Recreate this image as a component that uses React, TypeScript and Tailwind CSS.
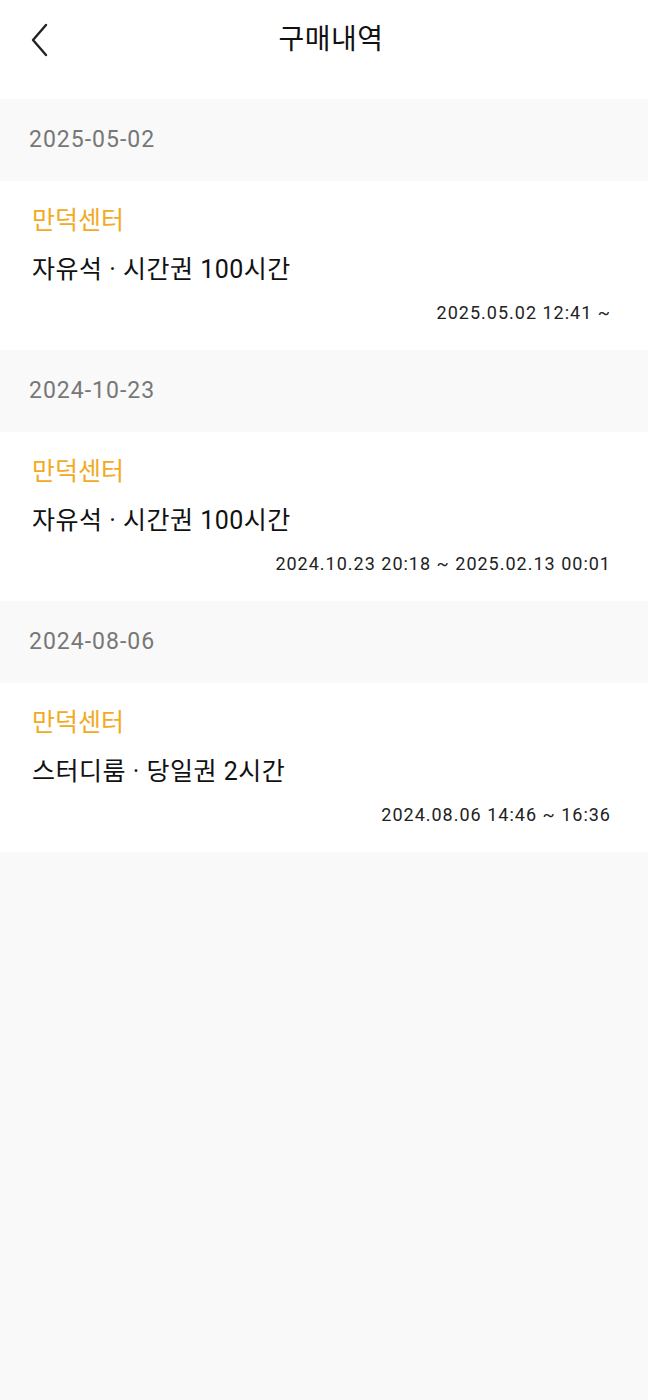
import React from 'react'

interface Purchase {
  day: string
  store: string
  title: string
  period: string
}

const purchases: Purchase[] = [
  { day: '2025-05-02', store: '만덕센터', title: '자유석 · 시간권 100시간', period: '2025.05.02 12:41 ~' },
  { day: '2024-10-23', store: '만덕센터', title: '자유석 · 시간권 100시간', period: '2024.10.23 20:18 ~ 2025.02.13 00:01' },
  { day: '2024-08-06', store: '만덕센터', title: '스터디룸 · 당일권 2시간', period: '2024.08.06 14:46 ~ 16:36' },
]

export default function App() {
  return (
    <div
      className="min-h-[1400px] bg-[#f9f9f9] text-[#111]"
      style={{ fontFamily: 'Roboto, "Noto Sans CJK KR", sans-serif' }}
    >
      <header className="relative h-[99px] bg-white flex items-start justify-center">
        <button className="absolute left-[22px] top-[18px] w-[36px] h-[44px] flex items-center justify-center">
          <svg width="22" height="34" viewBox="0 0 22 34" fill="none">
            <path d="M17 2 L4 17 L17 32" stroke="#222" strokeWidth="2.4" strokeLinecap="round" strokeLinejoin="round" />
          </svg>
        </button>
        <h1 className="mt-[20px] ml-[14px] text-[28px] leading-[40px] font-normal tracking-[0.5px]">구매내역</h1>
      </header>

      {purchases.map((p) => (
        <section key={p.day}>
          <div className="h-[82px] flex items-center px-[29px]">
            <span className="text-[23px] text-[#777] tracking-[1px]">{p.day}</span>
          </div>
          <div className="h-[169px] bg-white px-[32px] pt-[22px]">
            <div className="text-[25px] leading-[36px] text-[#f2aa1f]">{p.store}</div>
            <div className="mt-[13px] text-[25px] leading-[36px] tracking-[0.5px]">{p.title}</div>
            <div className="mt-[12px] pr-[5px] text-right text-[18px] leading-[26px] tracking-[1px] text-[#222]">{p.period}</div>
          </div>
        </section>
      ))}
    </div>
  )
}
